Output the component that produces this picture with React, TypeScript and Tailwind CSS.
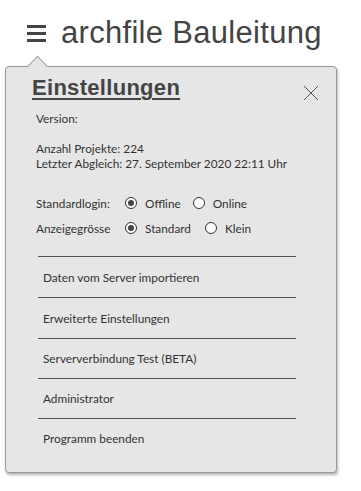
const body = { fontFamily: "Lato, 'Open Sans', sans-serif" };
const helv = { fontFamily: "'Liberation Sans', Arial, sans-serif" };

const Radio = ({ checked, label }: { checked: boolean; label: string }) => (
  <div className="flex items-center gap-[8px]">
    <span className="flex h-[12px] w-[12px] items-center justify-center rounded-full border border-[#333] bg-white">
      {checked && <span className="h-[6px] w-[6px] rounded-full bg-[#444]" />}
    </span>
    <span>{label}</span>
  </div>
);

const menu = [
  "Daten vom Server importieren",
  "Erweiterte Einstellungen",
  "Serververbindung Test (BETA)",
  "Administrator",
  "Programm beenden",
];

export default function App() {
  return (
    <div className="h-[491px] w-[361px] overflow-hidden bg-white">
      <div className="flex h-[66px] items-center pl-[27px]" style={helv}>
        <div className="flex w-[19px] flex-col gap-[4px]">
          <span className="h-[3px] bg-[#444]" />
          <span className="h-[3px] bg-[#444]" />
          <span className="h-[3px] bg-[#444]" />
        </div>
        <span className="ml-[15px] text-[31px] leading-[34px] tracking-[0.3px] text-[#444]">archfile Bauleitung</span>
      </div>

      <div
        className="relative ml-[5px] h-[407px] w-[332px] rounded-[4px] border border-[#9a9a9a] bg-[#e6e6e6] text-[11.8px] leading-[15px] text-[#333] shadow-[1px_2px_3px_rgba(0,0,0,0.3)]"
        style={body}
      >
        <span className="absolute left-[24px] top-[-8px] h-[15px] w-[15px] rotate-45 border-l border-t border-[#9a9a9a] bg-[#e6e6e6]" />

        <div className="relative flex items-start justify-between pl-[26px] pr-[17px] pt-[8px]">
          <span
            className="text-[22px] font-bold leading-[25px] tracking-[0.3px] text-[#444] underline decoration-2 underline-offset-[3px]"
            style={helv}
          >
            Einstellungen
          </span>
          <svg className="mt-[10px]" width="16" height="16" viewBox="0 0 16 16" fill="none" stroke="#555" strokeWidth="1">
            <path d="M1 1 L15 15 M15 1 L1 15" />
          </svg>
        </div>

        <div className="pl-[30px]">
          <div className="mt-[10px]">Version:</div>
          <div className="mt-[15px]">Anzahl Projekte: 224</div>
          <div>Letzter Abgleich: 27. September 2020 22:11 Uhr</div>

          <div className="mt-[22px] flex h-[20px] items-center">
            <span className="w-[89px]">Standardlogin:</span>
            <div className="flex items-center gap-[12px]">
              <Radio checked label="Offline" />
              <Radio checked={false} label="Online" />
            </div>
          </div>
          <div className="mt-[5px] flex h-[20px] items-center">
            <span className="w-[89px]">Anzeigegrösse</span>
            <div className="flex items-center gap-[14px]">
              <Radio checked label="Standard" />
              <Radio checked={false} label="Klein" />
            </div>
          </div>
        </div>

        <div className="ml-[32px] mt-[18px] w-[258px]">
          {menu.map((item, i) => (
            <div key={item}>
              <div className="h-px bg-[#555]" />
              <div className={`flex items-center pl-[5px] ${i < 2 ? "h-[40px]" : "h-[39px]"}`}>{item}</div>
            </div>
          ))}
        </div>
      </div>
    </div>
  );
}
